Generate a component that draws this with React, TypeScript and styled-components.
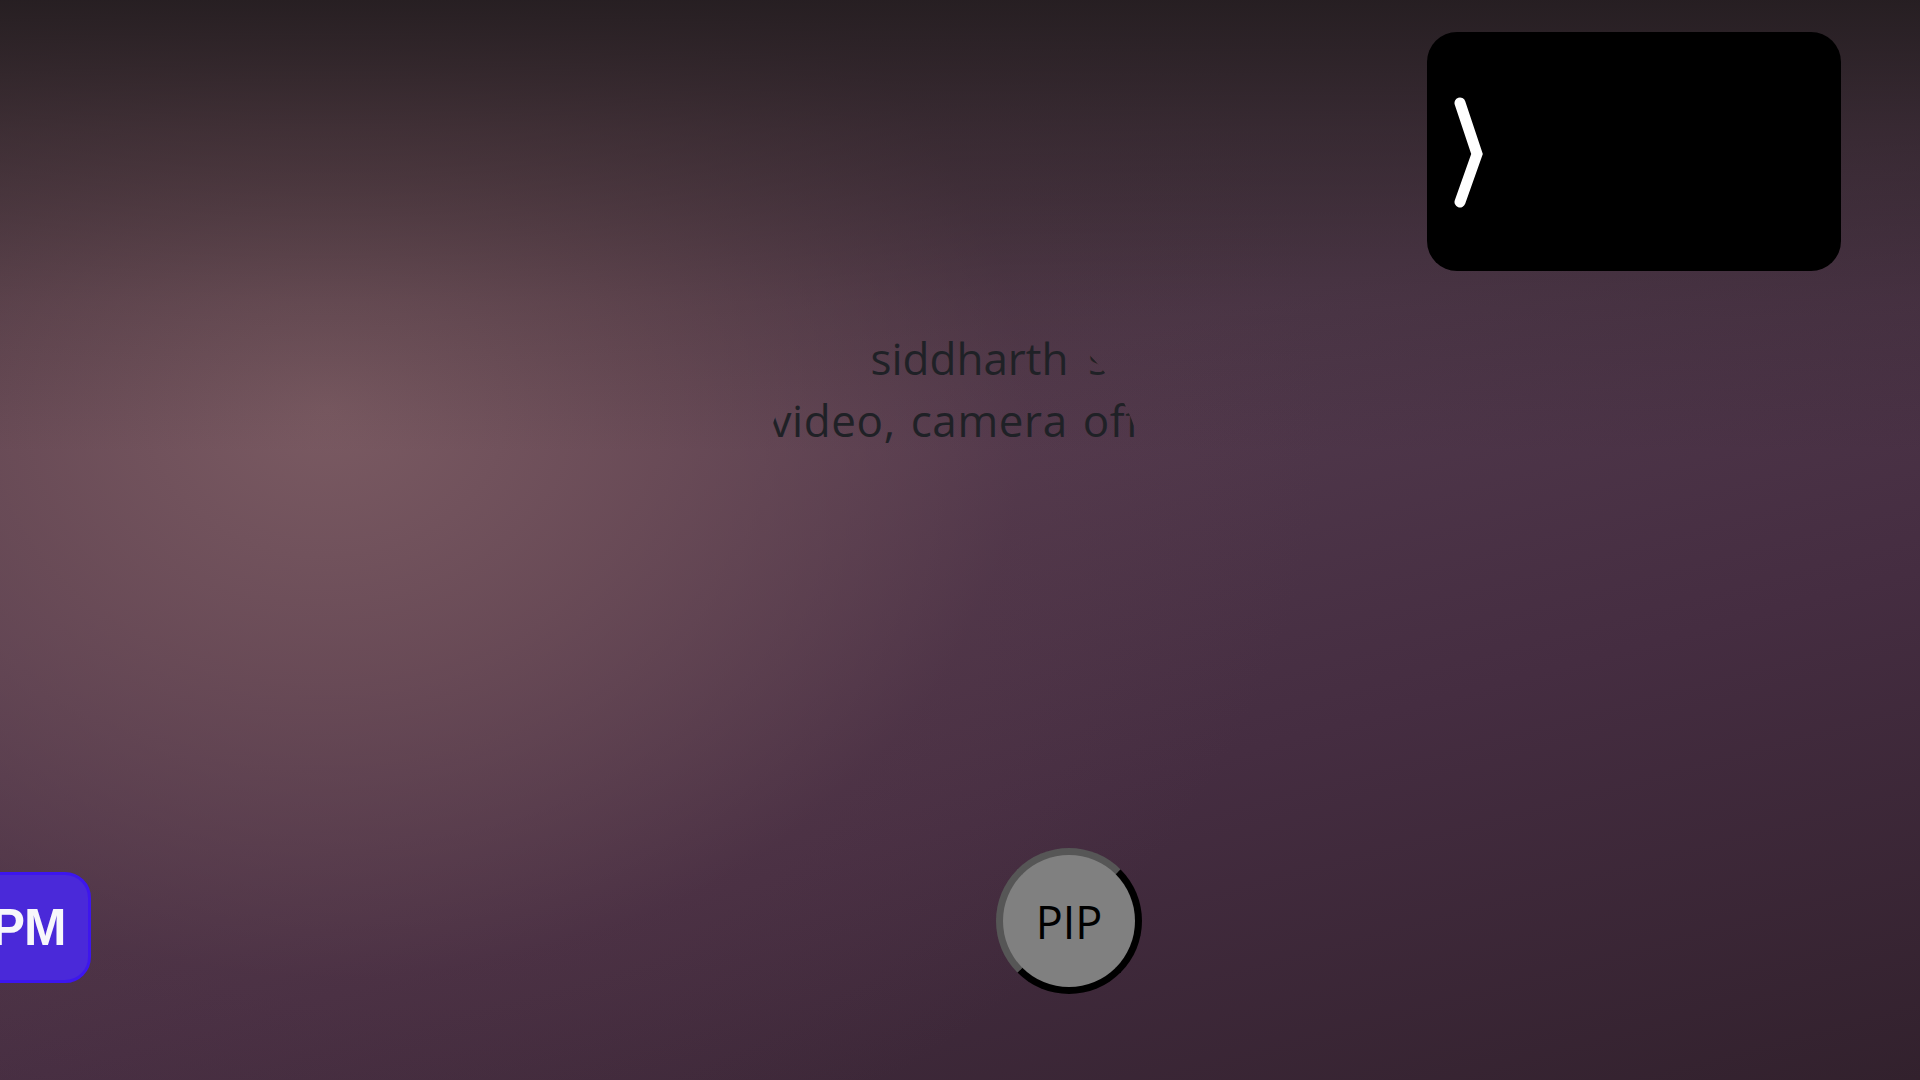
import React from "react";
import styled, { createGlobalStyle } from "styled-components";

const Global = createGlobalStyle`
  html, body { margin: 0; padding: 0; }
  body { font-family: "Open Sans", "Noto Sans", sans-serif; background: #30202c; }
`;

const Stage = styled.main`
  position: relative;
  box-sizing: border-box;
  width: 100%;
  height: 100vh;
  padding-right: 15px;
  overflow: hidden;
  display: flex;
  flex-direction: column;
  background:
    linear-gradient(180deg, rgba(36, 29, 32, 0.95) 0%, rgba(38, 30, 33, 0.6) 12%, rgba(38, 30, 33, 0.2) 28%, rgba(38, 30, 33, 0) 42%),
    radial-gradient(ellipse 52% 75% at 17% 38%, rgba(122, 90, 98, 1) 0%, rgba(112, 80, 90, 0.8) 32%, rgba(95, 62, 78, 0.25) 70%, rgba(95, 62, 78, 0) 100%),
    linear-gradient(165deg, #4f3d46 0%, #523a4d 40%, #452d41 68%, #32212d 100%);
`;

const TopBar = styled.header`
  display: flex;
  justify-content: flex-end;
  padding: 32px 64px 0 0;
`;

const PreviewCard = styled.section`
  width: 414px;
  height: 239px;
  border-radius: 30px;
  background: #000;
  display: flex;
  align-items: center;
  padding-left: 27px;
  box-sizing: border-box;
`;

const ChevronIcon = styled.svg`
  width: 34px;
  height: 120px;
  display: block;
  margin-top: 10px;
`;

const AvatarRow = styled.div`
  display: flex;
  justify-content: center;
  padding-top: 27px;
`;

const AvatarClip = styled.div`
  width: 384px;
  height: 384px;
  border-radius: 50%;
  overflow: hidden;
  display: flex;
  flex-direction: column;
  padding-top: 29px;
  box-sizing: border-box;
`;

const AltLine = styled.div<{ $indent: number; $spacing: number; $wordGap: number }>`
  padding-left: ${(p) => p.$indent}px;
  white-space: nowrap;
  font-family: "Open Sans", "Noto Sans", sans-serif;
  font-size: 44px;
  font-weight: 450;
  line-height: 62px;
  letter-spacing: ${(p) => p.$spacing}px;
  word-spacing: ${(p) => p.$wordGap}px;
  color: #1f2126;
`;

const PipButton = styled.button`
  position: absolute;
  left: 996px;
  top: 848px;
  width: 146px;
  height: 146px;
  box-sizing: border-box;
  border-radius: 50%;
  border: 7px solid;
  border-color: #565656 #000 #000 #565656;
  background: #808080;
  color: #000;
  font-family: "Open Sans", "Noto Sans", sans-serif;
  font-size: 45px;
  display: flex;
  align-items: center;
  justify-content: center;
  padding: 0;
  cursor: pointer;
`;

const ClockBadge = styled.div`
  position: absolute;
  left: -40px;
  top: 872px;
  height: 111px;
  box-sizing: border-box;
  padding: 0 22px 0 28px;
  display: flex;
  align-items: center;
  border: 3px solid #3d16ee;
  border-radius: 26px;
  background: #4a29d9;
  color: #f7f7fb;
  font-family: "Liberation Sans", Arial, sans-serif;
  font-weight: 700;
  font-size: 51px;
  letter-spacing: -1px;
`;

export default function App() {
  return (
    <>
      <Global />
      <Stage>
        <TopBar>
          <PreviewCard>
            <ChevronIcon viewBox="0 0 34 120" aria-hidden="true">
              <polyline
                points="6,6 23,57 6,105"
                fill="none"
                stroke="#fff"
                strokeWidth="11"
                strokeLinecap="round"
                strokeLinejoin="miter"
              />
            </ChevronIcon>
          </PreviewCard>
        </TopBar>
        <AvatarRow>
          <AvatarClip>
            <AltLine $indent={110} $spacing={0} $wordGap={8}>siddharth singh's</AltLine>
            <AltLine $indent={9} $spacing={0.6} $wordGap={3}>video, camera off</AltLine>
          </AvatarClip>
        </AvatarRow>
        <PipButton>PIP</PipButton>
        <ClockBadge>PM</ClockBadge>
      </Stage>
    </>
  );
}
